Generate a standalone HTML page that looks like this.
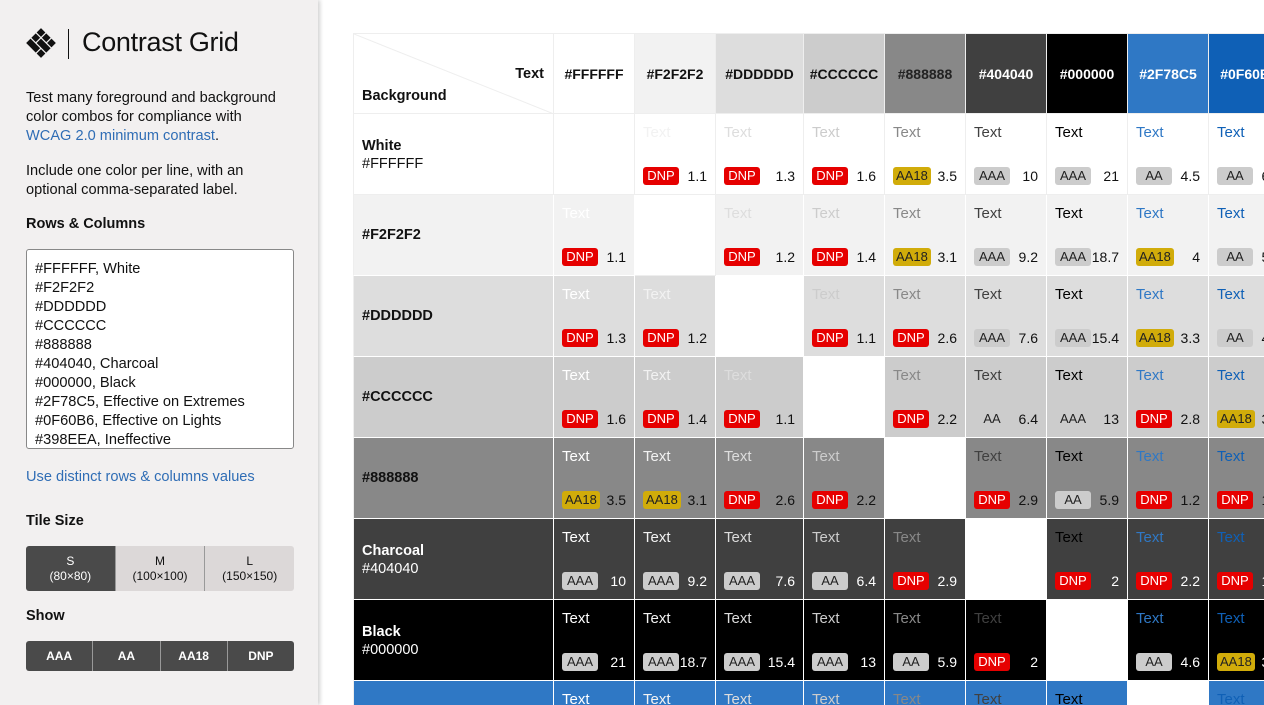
<!DOCTYPE html>
<html><head><meta charset="utf-8"><style>
*{box-sizing:border-box;margin:0;padding:0}
html,body{width:1264px;height:705px;overflow:hidden}
body{background:#fff;font-family:"Liberation Sans",sans-serif;color:#111;position:relative}
.side{position:absolute;left:0;top:0;width:318px;height:705px;background:#f2f0f0;box-shadow:2px 0 4px rgba(0,0,0,.18);z-index:2}
.logo{position:absolute;left:25px;top:27px}
.vl{position:absolute;left:68px;top:29px;width:1px;height:30px;background:#111}
h1{position:absolute;left:82px;top:27px;font-weight:normal;font-size:27px;letter-spacing:-.3px}
p{position:absolute;left:26px;font-size:14.6px;line-height:19px;width:285px}
a{color:#2f6db5;text-decoration:none}
h3{position:absolute;left:26px;font-size:14.5px;font-weight:bold}
.ta{position:absolute;left:26px;top:249px;width:268px;height:200px;background:#fff;border:1px solid #888;border-radius:3px;padding:10px 8px;font-size:14.6px;line-height:19px;overflow:hidden;white-space:pre}
.btns{position:absolute;left:26px;width:268px;display:flex;border-radius:3px;overflow:hidden}
.btns div{flex:1;text-align:center;border-right:1px solid #999}
.btns div:last-child{border:none}
.grid{position:absolute;left:353px;top:33px;width:911px;height:672px;overflow:hidden}
.r{display:flex;height:81px}
.c{position:relative;width:81px;height:81px;border-right:1px solid #fff;border-bottom:1px solid #fff;flex:none}
.w88{width:88px}
.h{width:201px;border-left:1px solid #eee}
.lt .c{border-color:#eee}
.t{position:absolute;left:8px;top:10px;font-size:15px}
.b{position:absolute;left:8px;bottom:9px;height:18px;min-width:36px;padding:0 3px;border-radius:3px;font-size:13px;line-height:18px;text-align:center;color:#222;background:#ccc}
.D{background:#e60000;color:#fff}
.Y{background:#d1ac0a}
.n{position:absolute;right:8px;bottom:9px;font-size:14px;line-height:18px}
.rh{position:absolute;left:8px;top:23px;font-size:14.5px;line-height:18px}
.rh b{display:block}
.hc{font-weight:bold;font-size:14px;text-align:center;line-height:80px;border-top:1px solid #eee}
.e{background:#fff!important}
.wt{color:#fff}
</style></head><body>
<div class="side">
<svg class="logo" width="32" height="32" viewBox="0 0 32 32"><g fill="#111" transform="rotate(45 16 16)"><rect x="5.5" y="5.5" width="6.2" height="6.2"/><rect x="12.9" y="5.5" width="6.2" height="6.2"/><rect x="20.3" y="5.5" width="6.2" height="6.2"/><rect x="5.5" y="12.9" width="6.2" height="6.2"/><rect x="12.9" y="12.9" width="13.6" height="6.2"/><rect x="5.5" y="20.3" width="13.6" height="6.2"/><rect x="20.3" y="20.3" width="6.2" height="6.2"/></g></svg>
<div class="vl"></div>
<h1>Contrast Grid</h1>
<p style="top:89px">Test many foreground and background<br>color combos for compliance with<br><a>WCAG 2.0 minimum contrast</a>.</p>
<p style="top:162px">Include one color per line, with an<br>optional comma-separated label.</p>
<h3 style="top:216px">Rows &amp; Columns</h3>
<div class="ta">#FFFFFF, White
#F2F2F2
#DDDDDD
#CCCCCC
#888888
#404040, Charcoal
#000000, Black
#2F78C5, Effective on Extremes
#0F60B6, Effective on Lights
#398EEA, Ineffective</div>
<p style="top:468px"><a>Use distinct rows &amp; columns values</a></p>
<h3 style="top:513px">Tile Size</h3>
<div class="btns" style="top:546px;height:45px;font-size:12px;line-height:15px">
<div style="background:#4a4a4a;color:#fff;padding-top:8px">S<br>(80×80)</div>
<div style="background:#dcd8d8;padding-top:8px">M<br>(100×100)</div>
<div style="background:#dcd8d8;padding-top:8px">L<br>(150×150)</div></div>
<h3 style="top:608px">Show</h3>
<div class="btns" style="top:641px;height:30px;font-size:12px;line-height:30px;font-weight:bold;color:#fff;background:#4a4a4a">
<div>AAA</div><div>AA</div><div>AA18</div><div>DNP</div></div>
</div>

<div class="grid">
<div class="r lt">
<div class="c h" style="background:#fff;border-top:1px solid #eee"><svg style="position:absolute;left:0;top:0" width="200" height="80"><line x1="0" y1="0" x2="200" y2="80" stroke="#eee"/></svg><b style="position:absolute;right:9px;top:32px;font-size:14.5px">Text</b><b style="position:absolute;left:8px;top:54px;font-size:14.5px">Background</b></div>
<div class="c hc" style="background:#fff">#FFFFFF</div>
<div class="c hc" style="background:#f2f2f2">#F2F2F2</div>
<div class="c hc w88" style="background:#ddd">#DDDDDD</div>
<div class="c hc" style="background:#ccc">#CCCCCC</div>
<div class="c hc" style="background:#888;color:#222">#888888</div>
<div class="c hc wt" style="background:#404040">#404040</div>
<div class="c hc wt" style="background:#000">#000000</div>
<div class="c hc wt" style="background:#2f78c5">#2F78C5</div>
<div class="c hc wt" style="background:#0f60b6">#0F60B6</div>
</div>

<div class="r lt" style="background:#fff">
<div class="c h"><div class="rh"><b>White</b>#FFFFFF</div></div>
<div class="c e"></div>
<div class="c"><span class="t" style="color:#f2f2f2">Text</span><span class="b D">DNP</span><span class="n">1.1</span></div>
<div class="c w88"><span class="t" style="color:#ddd">Text</span><span class="b D">DNP</span><span class="n">1.3</span></div>
<div class="c"><span class="t" style="color:#ccc">Text</span><span class="b D">DNP</span><span class="n">1.6</span></div>
<div class="c"><span class="t" style="color:#888">Text</span><span class="b Y">AA18</span><span class="n">3.5</span></div>
<div class="c"><span class="t" style="color:#404040">Text</span><span class="b">AAA</span><span class="n">10</span></div>
<div class="c"><span class="t" style="color:#000">Text</span><span class="b">AAA</span><span class="n">21</span></div>
<div class="c"><span class="t" style="color:#2f78c5">Text</span><span class="b">AA</span><span class="n">4.5</span></div>
<div class="c"><span class="t" style="color:#0f60b6">Text</span><span class="b">AA</span><span class="n">6.3</span></div>
</div>

<div class="r" style="background:#f2f2f2">
<div class="c h"><div class="rh" style="top:31px"><b>#F2F2F2</b></div></div>
<div class="c"><span class="t" style="color:#fff">Text</span><span class="b D">DNP</span><span class="n">1.1</span></div>
<div class="c e" style="border-color:#eee"></div>
<div class="c w88"><span class="t" style="color:#ddd">Text</span><span class="b D">DNP</span><span class="n">1.2</span></div>
<div class="c"><span class="t" style="color:#ccc">Text</span><span class="b D">DNP</span><span class="n">1.4</span></div>
<div class="c"><span class="t" style="color:#888">Text</span><span class="b Y">AA18</span><span class="n">3.1</span></div>
<div class="c"><span class="t" style="color:#404040">Text</span><span class="b">AAA</span><span class="n">9.2</span></div>
<div class="c"><span class="t" style="color:#000">Text</span><span class="b">AAA</span><span class="n">18.7</span></div>
<div class="c"><span class="t" style="color:#2f78c5">Text</span><span class="b Y">AA18</span><span class="n">4</span></div>
<div class="c"><span class="t" style="color:#0f60b6">Text</span><span class="b">AA</span><span class="n">5.8</span></div>
</div>

<div class="r" style="background:#ddd">
<div class="c h"><div class="rh" style="top:31px"><b>#DDDDDD</b></div></div>
<div class="c"><span class="t" style="color:#fff">Text</span><span class="b D">DNP</span><span class="n">1.3</span></div>
<div class="c"><span class="t" style="color:#f2f2f2">Text</span><span class="b D">DNP</span><span class="n">1.2</span></div>
<div class="c w88 e"></div>
<div class="c"><span class="t" style="color:#ccc">Text</span><span class="b D">DNP</span><span class="n">1.1</span></div>
<div class="c"><span class="t" style="color:#888">Text</span><span class="b D">DNP</span><span class="n">2.6</span></div>
<div class="c"><span class="t" style="color:#404040">Text</span><span class="b">AAA</span><span class="n">7.6</span></div>
<div class="c"><span class="t" style="color:#000">Text</span><span class="b">AAA</span><span class="n">15.4</span></div>
<div class="c"><span class="t" style="color:#2f78c5">Text</span><span class="b Y">AA18</span><span class="n">3.3</span></div>
<div class="c"><span class="t" style="color:#0f60b6">Text</span><span class="b">AA</span><span class="n">4.8</span></div>
</div>

<div class="r" style="background:#ccc">
<div class="c h"><div class="rh" style="top:31px"><b>#CCCCCC</b></div></div>
<div class="c"><span class="t" style="color:#fff">Text</span><span class="b D">DNP</span><span class="n">1.6</span></div>
<div class="c"><span class="t" style="color:#f2f2f2">Text</span><span class="b D">DNP</span><span class="n">1.4</span></div>
<div class="c w88"><span class="t" style="color:#ddd">Text</span><span class="b D">DNP</span><span class="n">1.1</span></div>
<div class="c e"></div>
<div class="c"><span class="t" style="color:#888">Text</span><span class="b D">DNP</span><span class="n">2.2</span></div>
<div class="c"><span class="t" style="color:#404040">Text</span><span class="b">AA</span><span class="n">6.4</span></div>
<div class="c"><span class="t" style="color:#000">Text</span><span class="b">AAA</span><span class="n">13</span></div>
<div class="c"><span class="t" style="color:#2f78c5">Text</span><span class="b D">DNP</span><span class="n">2.8</span></div>
<div class="c"><span class="t" style="color:#0f60b6">Text</span><span class="b Y">AA18</span><span class="n">3.9</span></div>
</div>

<div class="r" style="background:#888">
<div class="c h"><div class="rh" style="top:31px;color:#111"><b>#888888</b></div></div>
<div class="c"><span class="t" style="color:#fff">Text</span><span class="b Y">AA18</span><span class="n">3.5</span></div>
<div class="c"><span class="t" style="color:#f2f2f2">Text</span><span class="b Y">AA18</span><span class="n">3.1</span></div>
<div class="c w88"><span class="t" style="color:#ddd">Text</span><span class="b D">DNP</span><span class="n">2.6</span></div>
<div class="c"><span class="t" style="color:#ccc">Text</span><span class="b D">DNP</span><span class="n">2.2</span></div>
<div class="c e"></div>
<div class="c"><span class="t" style="color:#404040">Text</span><span class="b D">DNP</span><span class="n">2.9</span></div>
<div class="c"><span class="t" style="color:#000">Text</span><span class="b">AA</span><span class="n">5.9</span></div>
<div class="c"><span class="t" style="color:#2f78c5">Text</span><span class="b D">DNP</span><span class="n">1.2</span></div>
<div class="c"><span class="t" style="color:#0f60b6">Text</span><span class="b D">DNP</span><span class="n">1.6</span></div>
</div>

<div class="r" style="background:#404040;color:#fff">
<div class="c h"><div class="rh"><b>Charcoal</b>#404040</div></div>
<div class="c"><span class="t" style="color:#fff">Text</span><span class="b">AAA</span><span class="n">10</span></div>
<div class="c"><span class="t" style="color:#f2f2f2">Text</span><span class="b">AAA</span><span class="n">9.2</span></div>
<div class="c w88"><span class="t" style="color:#ddd">Text</span><span class="b">AAA</span><span class="n">7.6</span></div>
<div class="c"><span class="t" style="color:#ccc">Text</span><span class="b">AA</span><span class="n">6.4</span></div>
<div class="c"><span class="t" style="color:#888">Text</span><span class="b D">DNP</span><span class="n">2.9</span></div>
<div class="c e"></div>
<div class="c"><span class="t" style="color:#000">Text</span><span class="b D">DNP</span><span class="n">2</span></div>
<div class="c"><span class="t" style="color:#2f78c5">Text</span><span class="b D">DNP</span><span class="n">2.2</span></div>
<div class="c"><span class="t" style="color:#0f60b6">Text</span><span class="b D">DNP</span><span class="n">1.6</span></div>
</div>

<div class="r" style="background:#000;color:#fff">
<div class="c h"><div class="rh"><b>Black</b>#000000</div></div>
<div class="c"><span class="t" style="color:#fff">Text</span><span class="b">AAA</span><span class="n">21</span></div>
<div class="c"><span class="t" style="color:#f2f2f2">Text</span><span class="b">AAA</span><span class="n">18.7</span></div>
<div class="c w88"><span class="t" style="color:#ddd">Text</span><span class="b">AAA</span><span class="n">15.4</span></div>
<div class="c"><span class="t" style="color:#ccc">Text</span><span class="b">AAA</span><span class="n">13</span></div>
<div class="c"><span class="t" style="color:#888">Text</span><span class="b">AA</span><span class="n">5.9</span></div>
<div class="c"><span class="t" style="color:#404040">Text</span><span class="b D">DNP</span><span class="n">2</span></div>
<div class="c e"></div>
<div class="c"><span class="t" style="color:#2f78c5">Text</span><span class="b">AA</span><span class="n">4.6</span></div>
<div class="c"><span class="t" style="color:#0f60b6">Text</span><span class="b Y">AA18</span><span class="n">3.6</span></div>
</div>

<div class="r" style="background:#2f78c5;color:#fff;height:24px;overflow:hidden">
<div class="c h"></div>
<div class="c"><span class="t" style="color:#fff">Text</span></div>
<div class="c"><span class="t" style="color:#f2f2f2">Text</span></div>
<div class="c w88"><span class="t" style="color:#ddd">Text</span></div>
<div class="c"><span class="t" style="color:#ccc">Text</span></div>
<div class="c"><span class="t" style="color:#888">Text</span></div>
<div class="c"><span class="t" style="color:#404040">Text</span></div>
<div class="c"><span class="t" style="color:#000">Text</span></div>
<div class="c e"></div>
<div class="c"><span class="t" style="color:#0f60b6">Text</span></div>
</div>
</div>
</body></html>
